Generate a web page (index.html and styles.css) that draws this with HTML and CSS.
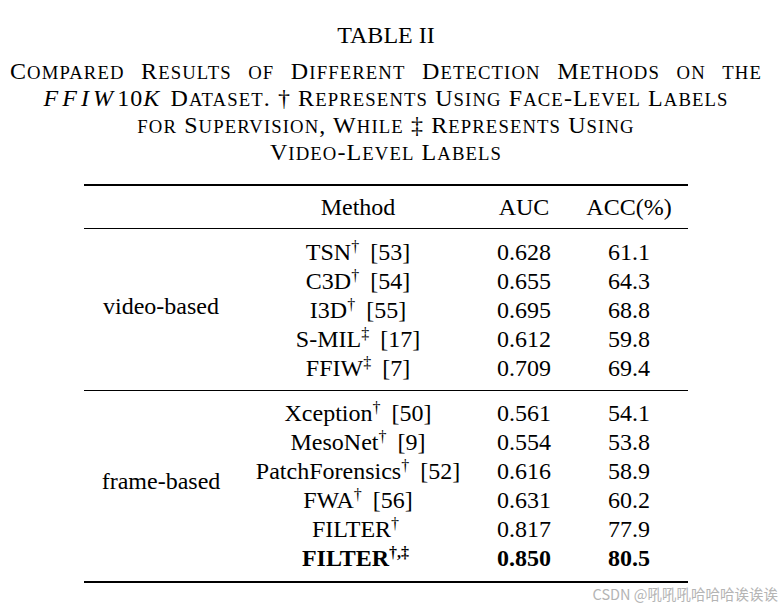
FILE: index.html
```html
<!DOCTYPE html>
<html>
<head>
<meta charset="utf-8">
<link rel="stylesheet" href="styles.css">
</head>
<body>
<div class="page">
  <div class="caption">
    <div class="tnum">TABLE II</div>
    <div class="tline justify">C<span class="sc">ompared</span> R<span class="sc">esults</span> <span class="sc">of</span> D<span class="sc">ifferent</span> D<span class="sc">etection</span> M<span class="sc">ethods</span> <span class="sc">on</span> <span class="sc">the</span></div>
    <div class="tline"><span class="math"><i>F</i><i>F</i><i>I</i><i>W</i>10<i>K</i></span> D<span class="sc">ataset</span>. † R<span class="sc">epresents</span> U<span class="sc">sing</span> F<span class="sc">ace</span>-L<span class="sc">evel</span> L<span class="sc">abels</span></div>
    <div class="tline"><span class="sc">for</span> S<span class="sc">upervision</span>, W<span class="sc">hile</span> ‡ R<span class="sc">epresents</span> U<span class="sc">sing</span></div>
    <div class="tline">V<span class="sc">ideo</span>-L<span class="sc">evel</span> L<span class="sc">abels</span></div>
  </div>

  <div class="table">
    <div class="head">
      <div></div>
      <div class="cell">Method</div>
      <div class="cell">AUC</div>
      <div class="cell">ACC(%)</div>
    </div>
    <div class="section">
      <div class="group">video-based</div>
      <div class="cell">TSN<sup>†</sup> [53]</div><div class="cell">0.628</div><div class="cell">61.1</div>
      <div class="cell">C3D<sup>†</sup> [54]</div><div class="cell">0.655</div><div class="cell">64.3</div>
      <div class="cell">I3D<sup>†</sup> [55]</div><div class="cell">0.695</div><div class="cell">68.8</div>
      <div class="cell">S-MIL<sup>‡</sup> [17]</div><div class="cell">0.612</div><div class="cell">59.8</div>
      <div class="cell">FFIW<sup>‡</sup> [7]</div><div class="cell">0.709</div><div class="cell">69.4</div>
    </div>
    <div class="section last">
      <div class="group">frame-based</div>
      <div class="cell">Xception<sup>†</sup> [50]</div><div class="cell">0.561</div><div class="cell">54.1</div>
      <div class="cell">MesoNet<sup>†</sup> [9]</div><div class="cell">0.554</div><div class="cell">53.8</div>
      <div class="cell">PatchForensics<sup>†</sup> [52]</div><div class="cell">0.616</div><div class="cell">58.9</div>
      <div class="cell">FWA<sup>†</sup> [56]</div><div class="cell">0.631</div><div class="cell">60.2</div>
      <div class="cell">FILTER<sup>†</sup></div><div class="cell">0.817</div><div class="cell">77.9</div>
      <div class="cell bold">FILTER<sup>†,‡</sup></div><div class="cell bold">0.850</div><div class="cell bold">80.5</div>
    </div>
  </div>
  <div class="watermark">CSDN @吼吼吼哈哈哈诶诶诶</div>
</div>
</body>
</html>
```

FILE: styles.css
```css
html, body {
  margin: 0;
  padding: 0;
  background: #fff;
}
.page {
  position: relative;
  width: 784px;
  height: 609px;
  overflow: hidden;
  font-family: "Liberation Serif", "Times New Roman", serif;
  color: #000;
}
.caption {
  width: 752px;
  margin-left: 10px;
  padding-top: 21px;
  text-align: center;
  font-size: 24px;
}
.tnum {
  line-height: 28px;
  margin-bottom: 9px;
}
.tline {
  height: 27px;
  line-height: 27px;
  white-space: nowrap;
  letter-spacing: 1.1px;
}
.tline.justify {
  text-align: justify;
  text-align-last: justify;
  white-space: normal;
}
.sc {
  text-transform: uppercase;
  font-size: 0.78em;
  line-height: 0;
}
.math i {
  font-style: italic;
  margin-right: 3px;
}
.table {
  width: 604px;
  margin-left: 84px;
  margin-top: 18px;
  border-top: 2px solid #000;
  border-bottom: 2px solid #000;
  font-size: 24px;
}
.head, .section {
  display: grid;
  grid-template-columns: 154px 240px 92px 118px;
}
.head {
  height: 42px;
  align-items: center;
  border-bottom: 1px solid #000;
}
.section {
  grid-auto-rows: 29px;
  padding: 9px 0 7px;
  border-bottom: 1px solid #000;
}
.section.last {
  border-bottom: none;
  padding-top: 8px;
  padding-bottom: 8px;
}
.cell {
  text-align: center;
  line-height: 29px;
  white-space: nowrap;
}
.head .cell {
  line-height: 28px;
}
.group {
  grid-column: 1;
  grid-row: 1 / span 5;
  align-self: center;
  text-align: center;
  line-height: 29px;
  margin-bottom: 9px;
}
.section.last .group {
  grid-row: 1 / span 6;
}
.section .cell:nth-child(3n+2) {
  grid-column: 2;
}
sup {
  font-size: 16px;
  line-height: 0;
  vertical-align: 8px;
  margin-right: 5px;
}
.bold {
  font-weight: bold;
}
.watermark {
  position: absolute;
  right: 6px;
  bottom: 7px;
  font-family: "Noto Sans CJK SC", "Noto Sans", sans-serif;
  font-size: 14.5px;
  color: #b4b4b4;
  line-height: 16px;
}
```
